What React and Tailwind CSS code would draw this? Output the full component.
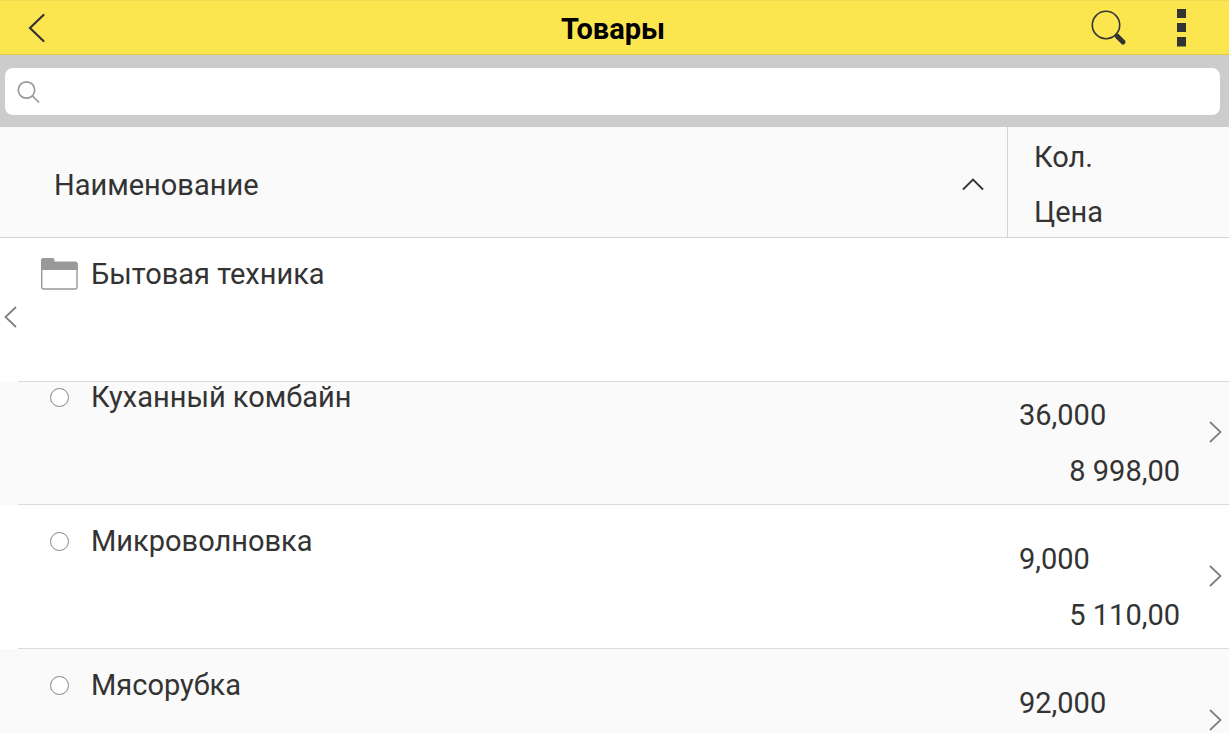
import React from 'react';

const products = [
  { id: 1, name: 'Куханный комбайн', quantity: '36,000', price: '8 998,00' },
  { id: 2, name: 'Микроволновка', quantity: '9,000', price: '5 110,00' },
  { id: 3, name: 'Мясорубка', quantity: '92,000' },
];

const BackIcon = () => (
  <svg width="18" height="30" viewBox="0 0 18 30" fill="none" stroke="#333333" strokeWidth="2.2">
    <path d="M16.500 2 3 15l13.500 13" strokeLinecap="round" />
  </svg>
);

const FindIcon = () => (
  <svg width="36" height="36" viewBox="0 0 36 36" fill="none" stroke="#333333">
    <circle cx="15" cy="15" r="13.7" strokeWidth="1.6" />
    <path d="M25 25 27 27" strokeWidth="4" />
    <path d="m26.500 26.500 5.500 5.500" strokeWidth="5" strokeLinecap="round" />
  </svg>
);

const MenuIcon = () => (
  <svg width="9" height="38" viewBox="0 0 9 38" fill="#333333">
    <rect width="9" height="9" />
    <rect y="14" width="9" height="9" />
    <rect y="28" width="9" height="9.5" />
  </svg>
);

const SearchIcon = () => (
  <svg width="24" height="24" viewBox="0 0 24 24" fill="none" stroke="#999999" strokeWidth="1.7">
    <circle cx="9.5" cy="10" r="8.2" />
    <path d="m15.500 16 6.500 6.500" />
  </svg>
);

const FolderIcon = () => (
  <svg className="block" width="37" height="32" viewBox="0 0 37 32">
    <rect x="0.7" y="4.7" width="35.3" height="26.3" rx="2" fill="#ffffff" stroke="#999999" strokeWidth="1.4" />
    <path d="M0 12V2Q0 0 2 0H11.500Q13.500 0 13.500 2V3.500H34.500Q36.700 3.500 36.700 6V12Z" fill="#999999" />
  </svg>
);

const Arrow = ({ d }) => (
  <svg className="block" width="13" height="22" viewBox="0 0 13 22" fill="none" stroke="#808080" strokeWidth="1.8">
    <path d={d} />
  </svg>
);

const ProductRow = ({ product, first }) => (
  <tr className="align-top odd:bg-[#fafafa] even:bg-white">
    <td></td>
    <td className={`border-b border-[#dcdcdc] pl-8 ${first ? 'pt-0' : 'pt-[21px]'}`}>
      <label className="flex items-center gap-[22px] leading-[30px]">
        <input
          type="radio"
          name="product"
          className="w-[19px] h-[19px] shrink-0 appearance-none rounded-full border border-[#858585] bg-white checked:bg-[#858585]"
        />
        {product.name}
      </label>
    </td>
    <td className={`border-b border-[#dcdcdc] pl-[11px] pr-6 pb-[5px] leading-[56px] ${first ? 'pt-[5px]' : 'pt-[26px]'}`}>
      <div>{product.quantity}</div>
      <div className="min-h-14 text-right">{product.price}</div>
    </td>
    <td className="border-b border-[#dcdcdc] pl-[5px] pb-[61px] align-bottom">
      <button className="block" aria-label="Открыть">
        <Arrow d="M1 1 11.500 11 1 21" />
      </button>
    </td>
  </tr>
);

const App = () => {
  return (
    <div className="h-screen overflow-hidden bg-white font-[Roboto,sans-serif] text-[29px] text-[#333333]">
      {/* Title bar */}
      <header className="grid grid-cols-[1fr_auto_1fr] items-center h-[55px] pl-[27px] pr-[30px] bg-[#fce650] border-t border-t-[#f0dc50] border-b border-b-[#dcc840]">
        <button className="justify-self-start" aria-label="Назад">
          <BackIcon />
        </button>
        <h1 className="pt-[3px] font-bold leading-10 text-black">Товары</h1>
        <div className="flex items-center justify-end gap-[50px] pr-[13px]">
          <button aria-label="Найти">
            <FindIcon />
          </button>
          <button aria-label="Меню">
            <MenuIcon />
          </button>
        </div>
      </header>

      {/* Search */}
      <div className="bg-[#cccccc] pt-[13px] pb-3 pl-[5px] pr-[9px]">
        <label className="flex items-center gap-3 h-[47px] px-3 rounded-lg bg-white">
          <SearchIcon />
          <input type="text" aria-label="Поиск" className="flex-1 outline-none" />
        </label>
      </div>

      {/* Products */}
      <table className="w-full table-fixed border-separate border-spacing-0">
        <colgroup>
          <col className="w-[18px]" />
          <col />
          <col className="w-[196px]" />
          <col className="w-[25px]" />
        </colgroup>
        <thead>
          <tr className="bg-[#fafafa] text-left">
            <th colSpan={2} className="border-b border-r border-[#d4d4d4] pl-[54px] pr-[23px] pt-1 font-normal">
              <button className="flex w-full items-center justify-between">
                <span className="pt-[3px]">Наименование</span>
                <svg width="22" height="13" viewBox="0 0 22 13" fill="none" stroke="#333333" strokeWidth="1.8">
                  <path d="m1 11.500 10-10L21 11.500" />
                </svg>
              </button>
            </th>
            <th colSpan={2} className="border-b border-[#d4d4d4] pl-[26px] pt-[5px] font-normal leading-[50px]">
              <div className="flex flex-col gap-[5px]">
                <span>Кол.</span>
                <span>Цена</span>
              </div>
            </th>
          </tr>
        </thead>
        <tbody>
          <tr className="h-36 align-top">
            <td className="pl-1 pt-[68px]">
              <button className="block" aria-label="Свернуть">
                <Arrow d="M12 1 1.500 11 12 21" />
              </button>
            </td>
            <td colSpan={3} className="border-b border-[#dcdcdc] pl-[23px] pt-5">
              <div className="flex items-center gap-[13px] leading-[30px]">
                <FolderIcon />
                Бытовая техника
              </div>
            </td>
          </tr>
        </tbody>
        <tbody>
          {products.map((product, index) => (
            <ProductRow key={product.id} product={product} first={index === 0} />
          ))}
        </tbody>
      </table>
    </div>
  );
};

export default App;
